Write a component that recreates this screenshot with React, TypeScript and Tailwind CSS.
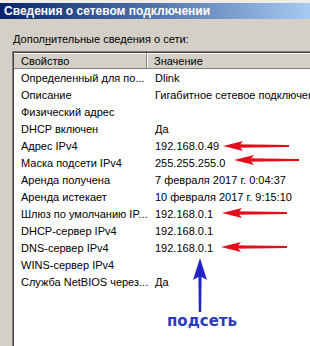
import React from 'react';

const rows: [string, string][] = [
  ['Определенный для по...', 'Dlink'],
  ['Описание', 'Гигабитное сетевое подключение Intel(R)'],
  ['Физический адрес', ''],
  ['DHCP включен', 'Да'],
  ['Адрес IPv4', '192.168.0.49'],
  ['Маска подсети IPv4', '255.255.255.0'],
  ['Аренда получена', '7 февраля 2017 г. 0:04:37'],
  ['Аренда истекает', '10 февраля 2017 г. 9:15:10'],
  ['Шлюз по умолчанию IP...', '192.168.0.1'],
  ['DHCP-сервер IPv4', '192.168.0.1'],
  ['DNS-сервер IPv4', '192.168.0.1'],
  ['WINS-сервер IPv4', ''],
  ['Служба NetBIOS через...', 'Да'],
];

// red annotation arrows: tip x, tail x, y
const redArrows = [
  { tip: 223, tail: 289, y: 146 },
  { tip: 234, tail: 299, y: 160 },
  { tip: 222, tail: 287, y: 213 },
  { tip: 221, tail: 287, y: 247 },
];

const Annotations: React.FC = () => (
  <svg className="absolute inset-0 pointer-events-none" width={310} height={346} viewBox="0 0 310 346">
    <defs>
      <filter id="soft" x="-10%" y="-50%" width="120%" height="200%">
        <feGaussianBlur stdDeviation="0.5" />
      </filter>
    </defs>
    <g filter="url(#soft)">
      {redArrows.map((a) => (
        <g key={a.y} fill="#e3101c">
          <polygon points={`${a.tip},${a.y} ${a.tip + 20},${a.y - 5} ${a.tip + 16},${a.y} ${a.tip + 20},${a.y + 5}`} />
          <polygon
            points={`${a.tip + 14},${a.y - 1.8} ${a.tail},${a.y - 1} ${a.tail},${a.y + 1} ${a.tip + 14},${a.y + 1.8}`}
          />
        </g>
      ))}
      <g fill="#2323c8">
        <polygon points="200,258 207,280 200,276 193,280" />
        <polygon points="198.4,274 201.6,274 201.2,312 198.8,312" />
      </g>
    </g>
  </svg>
);

export default function App() {
  return (
    <div className="w-[310px] h-[346px] overflow-hidden relative bg-[#d4d0c8] flex flex-col font-['Liberation_Sans',Arial,sans-serif] text-black">
      <div className="h-[3px] bg-[#eeede8] shrink-0" />
      <div className="h-[16px] shrink-0 bg-linear-to-r from-[#0a246a] to-[#a6caf0] flex items-center pl-[4px] text-white font-bold text-[12px] leading-none whitespace-nowrap">
        Сведения о сетевом подключении
      </div>
      <div className="flex-1 flex flex-col pl-[12px] pt-[14px] min-h-0">
        <div className="text-[11px] leading-[13px] pl-[1px] whitespace-nowrap">
          Допол<span className="underline">н</span>ительные сведения о сети:
        </div>
        <div className="mt-[5px] flex-1 border-t border-l border-[#808080] min-h-0 min-w-0">
          <div className="h-full border-t border-l border-[#404040] bg-white text-[11px] whitespace-nowrap overflow-hidden">
            <div className="flex h-[16px] bg-[#d4d0c8] border-b border-[#808080]">
              <div className="w-[133px] shrink-0 flex items-center pl-[7px] border-t border-white border-r border-r-[#808080]">
                Свойство
              </div>
              <div className="flex-1 flex items-center pl-[6px] border-t border-l border-white">Значение</div>
            </div>
            <div className="pt-[1px]">
              {rows.map(([k, v]) => (
                <div key={k} className="flex h-[17px] items-center">
                  <div className="w-[134px] shrink-0 pl-[7px]">{k}</div>
                  <div className="shrink-0 pl-[7px]">{v}</div>
                </div>
              ))}
            </div>
          </div>
        </div>
      </div>
      <Annotations />
      <div className="absolute left-[167px] top-[314px] text-[15px] font-bold leading-none text-[#2b3bbd] font-['DejaVu_Sans',sans-serif]">
        подсеть
      </div>
    </div>
  );
}
